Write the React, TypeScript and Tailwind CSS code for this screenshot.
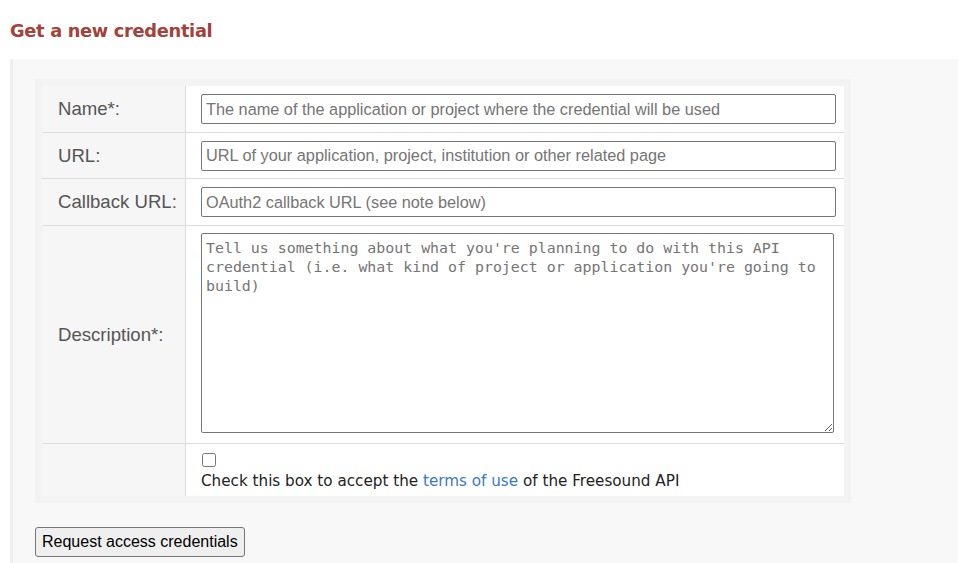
import React from 'react';

const rowLabel = 'flex items-center bg-[#f6f6f6] border-r border-[#dddddd] pl-[16px] text-[18.6px] text-[#555555]';
const inputCls =
  'w-full h-[30px] border border-[#767676] rounded-[2px] px-[4px] text-[16.3px] bg-white placeholder:text-[#757575] font-["Liberation_Sans",Arial,sans-serif] outline-none';

export default function App() {
  return (
    <div className="w-[958px] h-[563px] overflow-hidden bg-white font-['Liberation_Sans',Arial,sans-serif]">
      <h2 className="pl-[10px] pt-[18px] h-[59px] text-[17.8px] font-bold text-[#a3413b] font-['DejaVu_Sans',Verdana,sans-serif] tracking-[-0.3px]">
        Get a new credential
      </h2>

      <div className="ml-[10px] border-l-[3px] border-[#eeeeee] bg-[#f8f8f8] pl-[22px] pt-[20px] h-[504px]">
        <div className="w-[816px] bg-[#f3f3f3] p-[7px]">
          {/* ── Form rows ─────────────────────────── */}
          <div className="grid grid-cols-[144px_1fr] bg-white">
            <div className={`${rowLabel} h-[47px] border-b`}>Name*:</div>
            <div className="flex items-center pl-[15px] pr-[8px] h-[47px] border-b border-[#dddddd]">
              <input className={inputCls} placeholder="The name of the application or project where the credential will be used" />
            </div>

            <div className={`${rowLabel} h-[46px] border-b`}>URL:</div>
            <div className="flex items-center pl-[15px] pr-[8px] h-[46px] border-b border-[#dddddd]">
              <input className={inputCls} placeholder="URL of your application, project, institution or other related page" />
            </div>

            <div className={`${rowLabel} h-[47px] border-b`}>Callback URL:</div>
            <div className="flex items-center pl-[15px] pr-[8px] h-[47px] border-b border-[#dddddd]">
              <input className={inputCls} placeholder="OAuth2 callback URL (see note below)" />
            </div>

            <div className={`${rowLabel} h-[218px] border-b`}>Description*:</div>
            <div className="flex items-start pl-[15px] pr-[10px] pt-[7px] h-[218px] border-b border-[#dddddd]">
              <textarea
                className="w-full h-[200px] border border-[#767676] rounded-[2px] px-[4px] pt-[5px] text-[14.9px] leading-[19px] bg-white placeholder:text-[#757575] font-['DejaVu_Sans_Mono',monospace] outline-none"
                placeholder="Tell us something about what you're planning to do with this API credential (i.e. what kind of project or application you're going to build)"
              />
            </div>

            <div className={`${rowLabel} h-[52px]`}></div>
            <div className="flex flex-col pl-[15px] pt-[8px] h-[52px] text-[15.2px] text-[#222222] font-['DejaVu_Sans',Verdana,sans-serif]">
              <input type="checkbox" className="w-[14px] h-[14px] m-0 ml-[1px] mt-[1px]" />
              <span className="mt-[4px] leading-[20px]">
                Check this box to accept the <a className="text-[#3a78c9]" href="#">terms of use</a> of the Freesound API
              </span>
            </div>
          </div>
        </div>

        <button className="block mt-[24px] h-[30px] px-[6px] bg-[#efefef] border border-[#767676] rounded-[3px] text-[16px] text-black">
          Request access credentials
        </button>
      </div>
    </div>
  );
}
